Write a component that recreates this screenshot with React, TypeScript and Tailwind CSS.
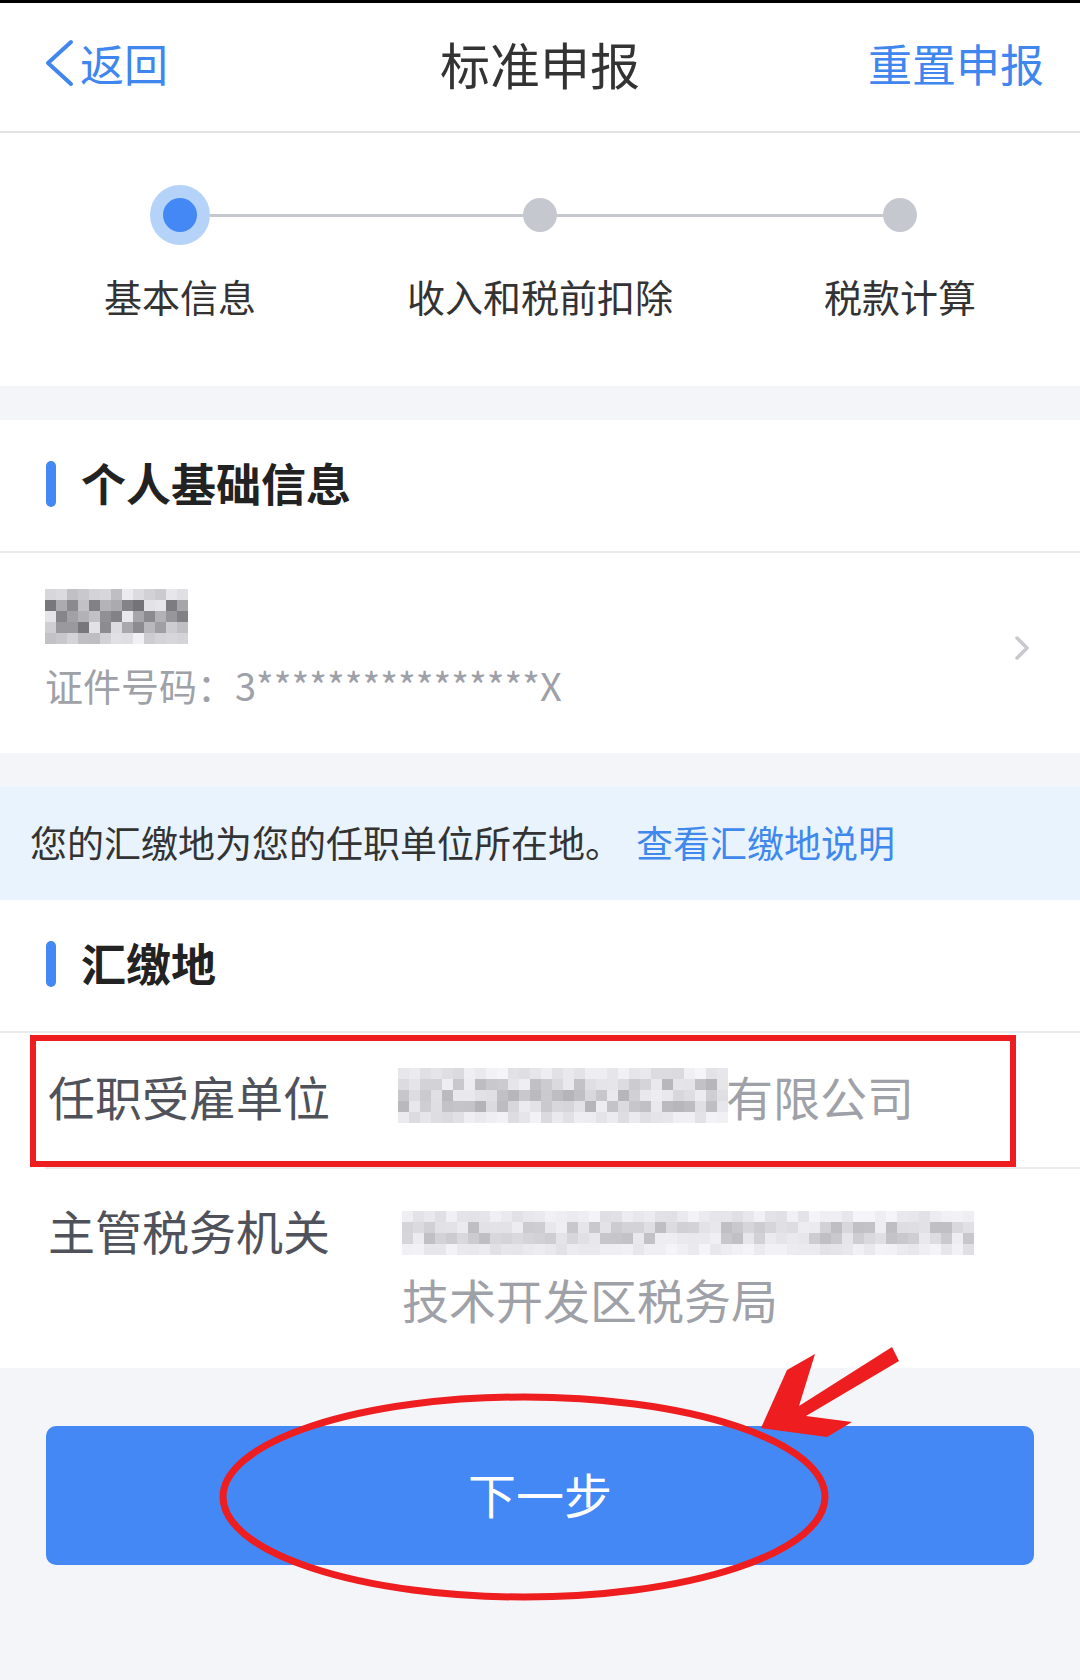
import React from 'react'

// fake pixelated blur for the masked values
function Mosaic({ cols, rows, seed, lo, hi }: { cols: number; rows: number; seed: number; lo: number; hi: number }) {
  let s = seed
  const cells: string[] = []
  for (let r = 0; r < rows; r++) {
    for (let c = 0; c < cols; c++) {
      s = (s * 9301 + 49297) % 233280
      let v = lo + (hi - lo) * (s / 233280)
      if (r === 0 || r === rows - 1) v = v + (250 - v) * 0.55
      const g = Math.round(v)
      cells.push(`rgb(${g},${g},${Math.min(255, g + 4)})`)
    }
  }
  return (
    <div className="flex flex-wrap" style={{ width: cols * 11 }}>
      {cells.map((bg, i) => (
        <div key={i} className="w-[11px] h-[11px]" style={{ background: bg }} />
      ))}
    </div>
  )
}

function SectionTitle({ text }: { text: string }) {
  return (
    <div className="h-[133px] bg-white flex items-center border-b-2 border-[#ebebed] pb-[7px]">
      <div className="ml-[46px] w-[10px] h-[46px] rounded-full bg-[#4388f5] mt-[3px]" />
      <span className="ml-[25px] text-[45px] leading-none font-bold text-[#222]">{text}</span>
    </div>
  )
}

const steps = [
  { label: '基本信息', active: true },
  { label: '收入和税前扣除', active: false },
  { label: '税款计算', active: false },
]

export default function App() {
  return (
    <div className="relative w-full min-h-[1680px] bg-[#f4f5f9] font-['Noto_Sans_CJK_SC','Noto_Sans',sans-serif]">
      <div className="h-[3px] bg-black" />

      {/* Header */}
      <div className="h-[130px] bg-white border-b-2 border-[#e2e2e5] grid grid-cols-[1fr_auto_1fr] items-center pb-[8px]">
        <div className="flex items-center pl-[44px] text-[#3f86ee]">
          <svg width="30" height="48" viewBox="0 0 30 48" fill="none">
            <path d="M27 3 L4 24 L27 45" stroke="#3f86ee" strokeWidth="4" strokeLinecap="round" strokeLinejoin="round" />
          </svg>
          <span className="ml-[6px] text-[44px] leading-none">返回</span>
        </div>
        <div className="text-[50px] leading-none text-[#333]">标准申报</div>
        <div className="text-right pr-[36px] text-[44px] leading-none text-[#3f86ee]">重置申报</div>
      </div>

      {/* Steps */}
      <div className="bg-white pt-[52px] pb-[71px] grid grid-cols-3">
        {steps.map((st, i) => (
          <div key={st.label} className="flex flex-col items-center">
            <div className="w-full h-[60px] flex items-center">
              <div className={`flex-1 h-[3px] ${i === 0 ? 'bg-transparent' : 'bg-[#c6c8d0]'}`} />
              {st.active ? (
                <div className="w-[60px] h-[60px] rounded-full bg-[#b5d3f8] flex items-center justify-center">
                  <div className="w-[34px] h-[34px] rounded-full bg-[#4388f5]" />
                </div>
              ) : (
                <div className="w-[34px] h-[34px] rounded-full bg-[#c6c8d0]" />
              )}
              <div className={`flex-1 h-[3px] ${i === 2 ? 'bg-transparent' : 'bg-[#c6c8d0]'}`} />
            </div>
            <div className="mt-[32px] text-[38px] leading-none text-[#333]">{st.label}</div>
          </div>
        ))}
      </div>

      <div className="h-[34px]" />

      {/* 个人基础信息 */}
      <SectionTitle text="个人基础信息" />
      <div className="bg-white h-[200px] px-[45px] flex items-center justify-between">
        <div className="flex flex-col pb-[14px]">
          <Mosaic cols={13} rows={5} seed={7} lo={110} hi={235} />
          <div className="mt-[22px] text-[38px] leading-none text-[#9fa1a8]">证件号码：3****************X</div>
        </div>
        <svg width="18" height="26" viewBox="0 0 18 26" fill="none" className="mr-[4px] mb-[10px]">
          <path d="M4 3 L14 13 L4 23" stroke="#c8c9ce" strokeWidth="3.5" strokeLinecap="round" strokeLinejoin="round" />
        </svg>
      </div>

      <div className="h-[34px]" />

      {/* 提示 */}
      <div className="h-[113px] bg-[#e8f3fe] flex items-center pl-[30px] pb-[3px] text-[37px] leading-none">
        <span className="text-[#333]">您的汇缴地为您的任职单位所在地。</span>
        <span className="ml-[14px] text-[#3f88ee]">查看汇缴地说明</span>
      </div>

      {/* 汇缴地 */}
      <SectionTitle text="汇缴地" />
      <div className="relative bg-white h-[134px] flex items-center pb-[9px]">
        <div className="w-[398px] pl-[48px] text-[47px] leading-none text-[#4f525a]">任职受雇单位</div>
        <div className="flex items-center">
          <Mosaic cols={30} rows={5} seed={31} lo={180} hi={240} />
          <span className="-ml-[2px] text-[47px] leading-none text-[#9fa1a8]">有限公司</span>
        </div>
        {/* annotation box */}
        <div className="absolute left-[30px] top-[2px] w-[986px] h-[132px] border-[6px] border-[#ee1d1f]" />
      </div>
      <div className="bg-white pl-[45px]">
        <div className="h-[2px] bg-[#ececee]" />
      </div>
      <div className="bg-white h-[199px] flex items-start pt-[37px]">
        <div className="w-[402px] pl-[48px] text-[47px] leading-none text-[#4f525a]">主管税务机关</div>
        <div className="flex flex-col pt-[5px]">
          <Mosaic cols={52} rows={4} seed={113} lo={190} hi={240} />
          <div className="mt-[20px] text-[47px] leading-none text-[#9fa1a8]">技术开发区税务局</div>
        </div>
      </div>

      {/* 下一步 */}
      <div className="px-[46px] pt-[58px]">
        <button className="w-full h-[139px] rounded-[10px] bg-[#4388f5] text-white text-[48px] leading-none pb-[5px]">
          下一步
        </button>
      </div>

      {/* red ellipse + arrow annotation */}
      <svg className="absolute inset-0 pointer-events-none" width="1080" height="1680" viewBox="0 0 1080 1680">
        <ellipse cx="524" cy="1497" rx="301" ry="100" fill="none" stroke="#ee1d1f" strokeWidth="7" />
        <polygon
          points="761,1428 787,1370 815,1354 799,1406 892,1347 899,1361 806,1416 852,1422 827,1437"
          fill="#ee1d1f"
        />
      </svg>
    </div>
  )
}
